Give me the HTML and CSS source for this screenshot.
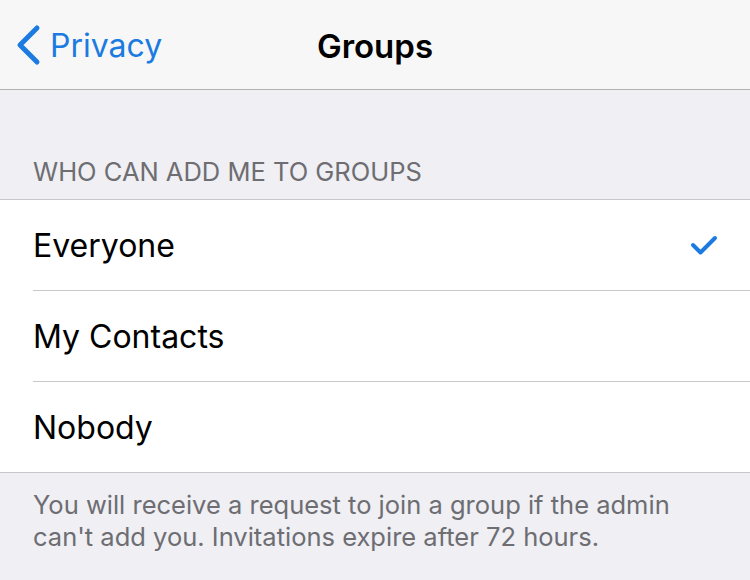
FILE: index.html
```html
<!DOCTYPE html>
<html lang="en">
<head>
    <meta charset="UTF-8">
    <meta name="viewport" content="width=device-width, initial-scale=1.0">
    <title>Groups</title>
    <link rel="stylesheet" href="styles.css">
</head>
<body>
    <div class="screen">
        <div class="navbar">
            <a class="back" href="#">
                <svg class="chevron" width="26" height="42" viewBox="0 0 26 42">
                    <path d="M22 4 L5 21 L22 38" fill="none" stroke="#1b7be0" stroke-width="5" stroke-linecap="round" stroke-linejoin="round"/>
                </svg>
                <span>Privacy</span>
            </a>
            <div class="title">Groups</div>
        </div>

        <div class="section-header">WHO CAN ADD ME TO GROUPS</div>

        <div class="list">
            <div class="row">
                <div class="row-inner">
                    <span>Everyone</span>
                    <svg class="check" width="28" height="22" viewBox="0 0 28 22">
                        <path d="M3 11 L10.5 18.5 L25 4" fill="none" stroke="#1b7be0" stroke-width="4" stroke-linecap="round" stroke-linejoin="round"/>
                    </svg>
                </div>
            </div>
            <div class="row">
                <div class="row-inner"><span>My Contacts</span></div>
            </div>
            <div class="row">
                <div class="row-inner last"><span>Nobody</span></div>
            </div>
        </div>

        <div class="footer">
            You will receive a request to join a group if the admin
            can't add you. Invitations expire after 72 hours.
        </div>
    </div>
</body>
</html>
```

FILE: styles.css
```css
body {
    margin: 0;
    font-family: Inter, Roboto, "Liberation Sans", sans-serif;
    background-color: #efeff4;
}
.screen {
    width: 750px;
    height: 580px;
    overflow: hidden;
    background-color: #efeff4;
}
.navbar {
    display: flex;
    align-items: center;
    justify-content: center;
    position: relative;
    height: 89px;
    background-color: #f7f7f7;
    border-bottom: 1px solid #b2b2b2;
}
.back {
    position: absolute;
    left: 15px;
    top: 24px;
    display: flex;
    align-items: center;
    gap: 9px;
    color: #1b7be0;
    text-decoration: none;
    font-size: 32px;
}
.title {
    font-size: 33px;
    font-weight: 600;
    color: #000;
    margin-top: 2px;
}
.section-header {
    padding: 66px 0 12px 33px;
    font-size: 25.5px;
    color: #6d6d72;
    letter-spacing: 0;
}
.list {
    background-color: #fff;
    border-top: 1px solid #c8c7cc;
    border-bottom: 1px solid #c8c7cc;
}
.row {
    padding-left: 33px;
}
.row-inner {
    display: flex;
    align-items: center;
    justify-content: space-between;
    height: 90px;
    padding-right: 32px;
    border-bottom: 1px solid #c8c7cc;
    font-size: 32px;
    color: #000;
}
.row-inner.last {
    border-bottom: none;
}
.footer {
    padding: 16px 40px 0 33px;
    font-size: 25.5px;
    line-height: 32px;
    color: #6d6d72;
}
```
